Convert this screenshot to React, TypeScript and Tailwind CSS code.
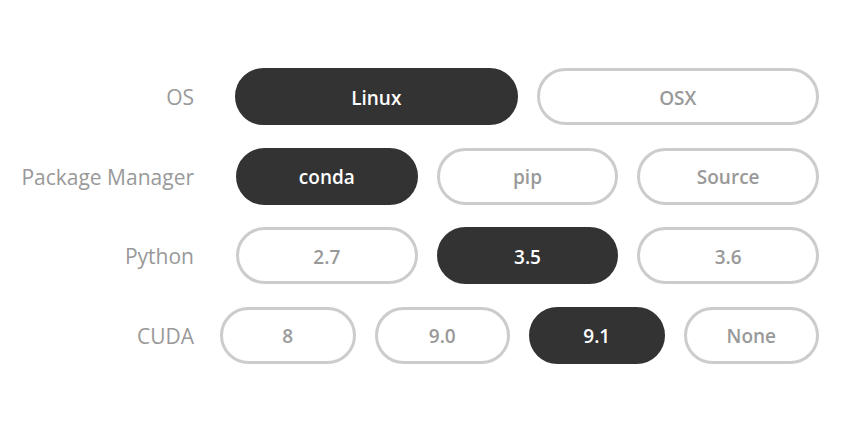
const rows = [
  { label: 'OS', options: ['Linux', 'OSX'], selected: 'Linux', offset: 'ml-[41px]' },
  { label: 'Package Manager', options: ['conda', 'pip', 'Source'], selected: 'conda', offset: 'ml-[42px]' },
  { label: 'Python', options: ['2.7', '3.5', '3.6'], selected: '3.5', offset: 'ml-[42px]' },
  { label: 'CUDA', options: ['8', '9.0', '9.1', 'None'], selected: '9.1', offset: 'ml-[26px]' },
];

export default function App() {
  return (
    <div
      className="w-[866px] h-[429px] bg-white pt-[68px] pr-[47px]"
      style={{ fontFamily: '"Open Sans", sans-serif' }}
    >
      <div className="flex flex-col gap-[22.5px]">
        {rows.map((row) => (
          <div key={row.label} className="flex items-center">
            <div className="w-[194px] shrink-0 pt-[3px] text-right text-[21px] text-[#999999]">{row.label}</div>
            <div className={`flex flex-1 gap-[19px] ${row.offset}`}>
              {row.options.map((opt) => {
                const active = opt === row.selected;
                return (
                  <div
                    key={opt}
                    className={`flex h-[57px] flex-1 items-center justify-center rounded-full border-[3px] pt-[3px] text-[19px] font-semibold ${
                      active
                        ? 'border-[#333333] bg-[#333333] text-white'
                        : 'border-[#cccccc] bg-white text-[#999999]'
                    }`}
                  >
                    {opt}
                  </div>
                );
              })}
            </div>
          </div>
        ))}
      </div>
    </div>
  );
}
